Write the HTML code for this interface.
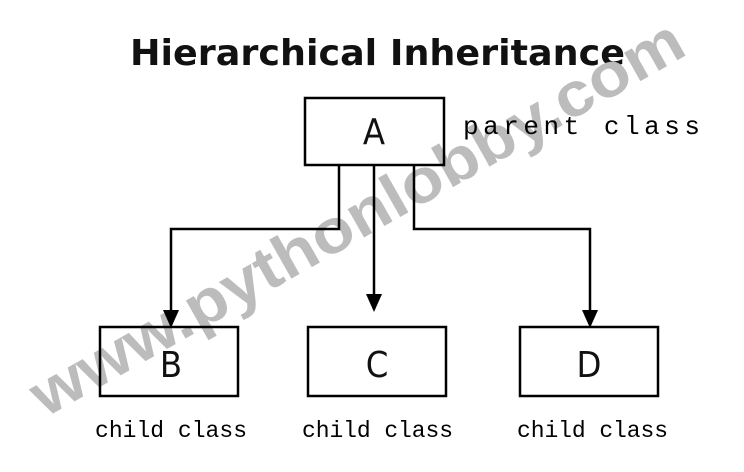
<!DOCTYPE html>
<html><head><style>body{margin:0;background:#fff}</style></head><body>
<svg width="744" height="467" viewBox="0 0 744 467" xmlns="http://www.w3.org/2000/svg">
<rect width="744" height="467" fill="#fff"/>
<text x="130" y="65" font-family="DejaVu Sans, sans-serif" font-weight="bold" font-size="36" textLength="495" lengthAdjust="spacingAndGlyphs" fill="#111">Hierarchical Inheritance</text>
<text transform="translate(45,418) rotate(-29.5)" font-family="Liberation Sans, sans-serif" font-weight="bold" font-size="62" fill="#bcbcbc" textLength="740" lengthAdjust="spacingAndGlyphs">www.pythonlobby.com</text>
<g stroke="#000" stroke-width="2.5" fill="none">
<rect x="305" y="98" width="139" height="67"/>
<rect x="100" y="327" width="138" height="69"/>
<rect x="308" y="327" width="138" height="69"/>
<rect x="520" y="327" width="138" height="69"/>
<polyline points="339,165 339,229 171,229 171,312"/>
<polyline points="374,165 374,296"/>
<polyline points="414,165 414,229 590,229 590,312"/>
</g>
<g fill="#000">
<polygon points="163,310 179,310 171,328"/>
<polygon points="366,294 382,294 374,312"/>
<polygon points="582,310 598,310 590,328"/>
</g>
<g font-family="DejaVu Sans Condensed, Liberation Sans, sans-serif" font-size="36" fill="#111" text-anchor="middle">
<text x="374" y="144">A</text>
<text x="171" y="377">B</text>
<text x="377" y="377">C</text>
<text x="589" y="377">D</text>
</g>
<g font-family="Liberation Mono, monospace" fill="#000">
<text x="463" y="134" font-size="26" textLength="237" lengthAdjust="spacing">parent class</text>
<text x="95" y="437" font-size="23" textLength="152" lengthAdjust="spacing">child class</text>
<text x="302" y="437" font-size="23" textLength="151" lengthAdjust="spacing">child class</text>
<text x="517" y="437" font-size="23" textLength="151" lengthAdjust="spacing">child class</text>
</g>
</svg>
</body></html>
